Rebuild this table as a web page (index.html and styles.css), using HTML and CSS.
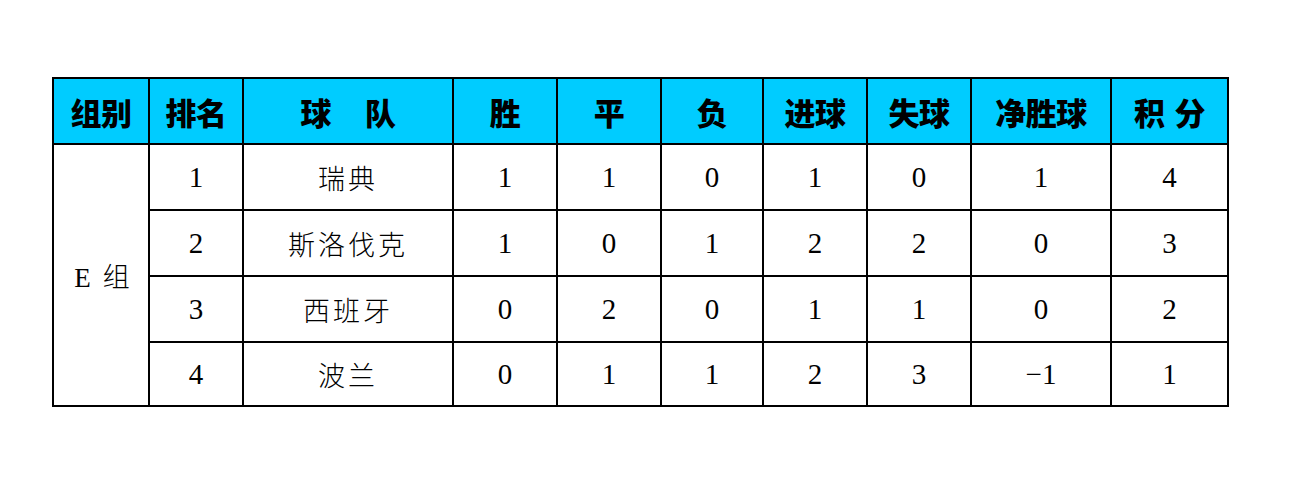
FILE: index.html
```html
<!DOCTYPE html>
<html lang="zh-CN">
<head>
<meta charset="utf-8">
<title>E组积分榜</title>
<link rel="stylesheet" href="styles.css">
</head>
<body>
<table class="standings">
  <colgroup>
    <col class="c-group"><col class="c-rank"><col class="c-team"><col class="c-num"><col class="c-num"><col class="c-num3"><col class="c-num"><col class="c-num"><col class="c-gd"><col class="c-pts">
  </colgroup>
  <thead>
    <tr>
      <th>组别</th><th>排名</th><th>球<span class="gap"></span>队</th><th>胜</th><th>平</th><th>负</th><th>进球</th><th>失球</th><th>净胜球</th><th>积<span class="gap-s"></span>分</th>
    </tr>
  </thead>
  <tbody>
    <tr>
      <td rowspan="4" class="group">E<span class="gap-e"></span>组</td>
      <td>1</td><td class="team">瑞典</td><td>1</td><td>1</td><td>0</td><td>1</td><td>0</td><td>1</td><td>4</td>
    </tr>
    <tr>
      <td>2</td><td class="team">斯洛伐克</td><td>1</td><td>0</td><td>1</td><td>2</td><td>2</td><td>0</td><td>3</td>
    </tr>
    <tr>
      <td>3</td><td class="team">西班牙</td><td>0</td><td>2</td><td>0</td><td>1</td><td>1</td><td>0</td><td>2</td>
    </tr>
    <tr class="last">
      <td>4</td><td class="team">波兰</td><td>0</td><td>1</td><td>1</td><td>2</td><td>3</td><td>−1</td><td>1</td>
    </tr>
  </tbody>
</table>
</body>
</html>
```
FILE: styles.css
```css
html, body {
  margin: 0;
  padding: 0;
  background: #ffffff;
}
body {
  padding: 77px 0 0 52px;
}
.standings {
  border-collapse: collapse;
  table-layout: fixed;
  width: 1177px;
  font-family: "Liberation Serif", "Noto Sans CJK SC", serif;
  color: #000;
}
.c-group { width: 96px; }
.c-rank { width: 94px; }
.c-team { width: 210px; }
.c-num { width: 104px; }
.c-num3 { width: 102px; }
.c-gd { width: 140px; }
.c-pts { width: 117px; }
.standings th,
.standings td {
  border: 2px solid #000;
  text-align: center;
  vertical-align: middle;
  padding: 0;
}
.standings th {
  background: #00ccff;
  height: 64px;
  font-family: "Noto Sans CJK SC", sans-serif;
  font-weight: 900;
  font-size: 31px;
  letter-spacing: -0.5px;
  line-height: 1;
}
.standings td {
  height: 64px;
  font-size: 29px;
}
.standings tr.last td {
  height: 62px;
}
.standings td.team,
.standings td.group {
  font-family: "Liberation Serif", "Noto Sans CJK SC", serif;
  font-size: 27px;
  letter-spacing: 3px;
  font-weight: 300;
}
.standings td.group {
  letter-spacing: 0;
  padding-left: 2px;
}
.gap {
  display: inline-block;
  width: 34px;
}
.gap-s {
  display: inline-block;
  width: 10px;
}
.gap-e {
  display: inline-block;
  width: 12px;
}
```
